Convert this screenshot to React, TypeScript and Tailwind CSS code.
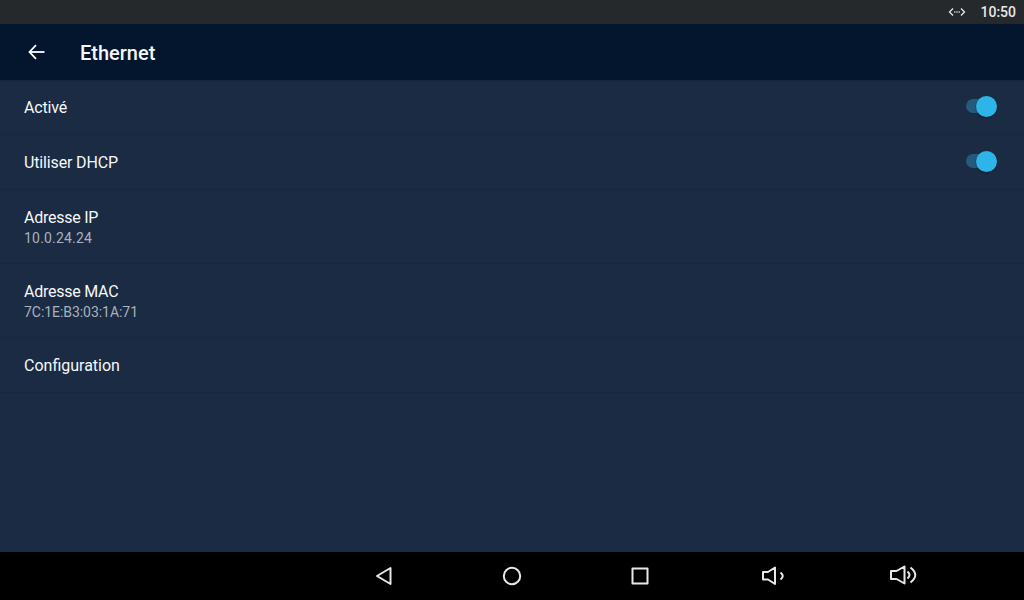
import React from "react";

function Toggle() {
  return (
    <div className="relative w-[31px] h-[14px] mb-[2px] rounded-full bg-[#245a7c]">
      <div className="absolute right-0 top-[-3px] w-[21px] h-[21px] rounded-full bg-[#2db4e8] shadow-[0_1px_2px_rgba(0,0,0,0.35)]" />
    </div>
  );
}

function Row({ title, sub, h, toggle, tt = "", ts = "" }: { title: string; sub?: string; h: string; toggle?: boolean; tt?: string; ts?: string }) {
  return (
    <div className={`${h} flex items-center justify-between pl-6 pr-[27px] border-b border-[#17273e]`}>
      <div className="flex flex-col pt-[2px]">
        <span className={`text-[16px] leading-[20px] text-[#f6f8fa] ${tt}`}>{title}</span>
        {sub && <span className={`text-[14px] leading-[20px] text-[#abb2bb] ${ts}`}>{sub}</span>}
      </div>
      {toggle && <Toggle />}
    </div>
  );
}

export default function App() {
  return (
    <div className="w-[1024px] h-[600px] flex flex-col overflow-hidden bg-[#1a2b43] font-['Roboto',sans-serif]">
      <div className="h-6 bg-[#25292c] flex items-center justify-end pr-2 gap-[15px] text-[#e6e8e8]">
        <svg width="18" height="12" viewBox="0 0 18 12" fill="none" stroke="#e8e8e8" strokeWidth="1.3" className="translate-x-[1px]">
          <path d="M5 2.5 L1.5 6 L5 9.5" />
          <path d="M13 2.5 L16.5 6 L13 9.5" />
          <circle cx="6.8" cy="6" r="0.8" fill="#e8e8e8" stroke="none" />
          <circle cx="9" cy="6" r="0.8" fill="#e8e8e8" stroke="none" />
          <circle cx="11.2" cy="6" r="0.8" fill="#e8e8e8" stroke="none" />
        </svg>
        <span className="text-[14px] font-medium leading-6">10:50</span>
      </div>
      <div className="h-14 bg-[#03162e] flex items-center pl-[28px] gap-[35px] shadow-[0_1px_2px_rgba(0,0,0,0.2)]">
        <svg width="17" height="16" viewBox="0 0 17 16" fill="none" stroke="#ffffff" strokeWidth="1.8">
          <path d="M16.5 8 H1.5" />
          <path d="M8 1.2 L1.5 8 L8 14.8" />
        </svg>
        <span className="text-[20px] font-medium text-[#f5f6f7] leading-none pt-[2px]">Ethernet</span>
      </div>
      <div className="flex-1 flex flex-col">
        <Row title="Activé" h="h-[55px]" toggle tt="tracking-[-0.15px]" />
        <Row title="Utiliser DHCP" h="h-[55px]" toggle tt="tracking-[-0.15px]" />
        <Row title="Adresse IP" sub="10.0.24.24" h="h-[74px]" tt="tracking-[-0.25px]" ts="tracking-[0.2px]" />
        <Row title="Adresse MAC" sub="7C:1E:B3:03:1A:71" h="h-[74px]" tt="tracking-[-0.25px]" ts="tracking-[-0.05px]" />
        <Row title="Configuration" h="h-[55px]" />
      </div>
      <div className="h-12 bg-black flex items-center pl-[368px] text-[#e8e8e8]">
        <div className="w-8 flex justify-center mr-[96px]">
          <svg width="18" height="20" viewBox="0 0 18 20" fill="none" stroke="currentColor" strokeWidth="2" strokeLinejoin="round">
            <path d="M15.5 2 V18 L2 10 Z" />
          </svg>
        </div>
        <div className="w-8 flex justify-center mr-[96px]">
          <svg width="20" height="20" viewBox="0 0 20 20" fill="none" stroke="currentColor" strokeWidth="2">
            <circle cx="10" cy="10" r="8.2" />
          </svg>
        </div>
        <div className="w-8 flex justify-center mr-[101px]">
          <svg width="18" height="18" viewBox="0 0 18 18" fill="none" stroke="currentColor" strokeWidth="2" strokeLinejoin="round">
            <rect x="1.5" y="1.5" width="15" height="15" />
          </svg>
        </div>
        <div className="w-8 flex justify-center mr-[98px]">
          <svg width="24" height="20" viewBox="0 0 24 20" fill="none" stroke="currentColor" strokeWidth="2" strokeLinejoin="round">
            <path d="M2 6 H7 L14 1.5 V18 L7 13.5 H2 Z" />
            <path d="M19.5 6.5 Q24 10 19.5 13.5" />
          </svg>
        </div>
        <div className="w-8 flex justify-center">
          <svg width="28" height="22" viewBox="0 0 28 22" fill="none" stroke="currentColor" strokeWidth="2" strokeLinejoin="round">
            <path d="M2 6 H7.5 L15.5 1.5 V18.5 L7.5 14 H2 Z" />
            <path d="M18.5 6.5 Q22.5 10 18.5 13.5" />
            <path d="M21.5 2.5 Q31 10 21.5 17.5" />
          </svg>
        </div>
      </div>
    </div>
  );
}
